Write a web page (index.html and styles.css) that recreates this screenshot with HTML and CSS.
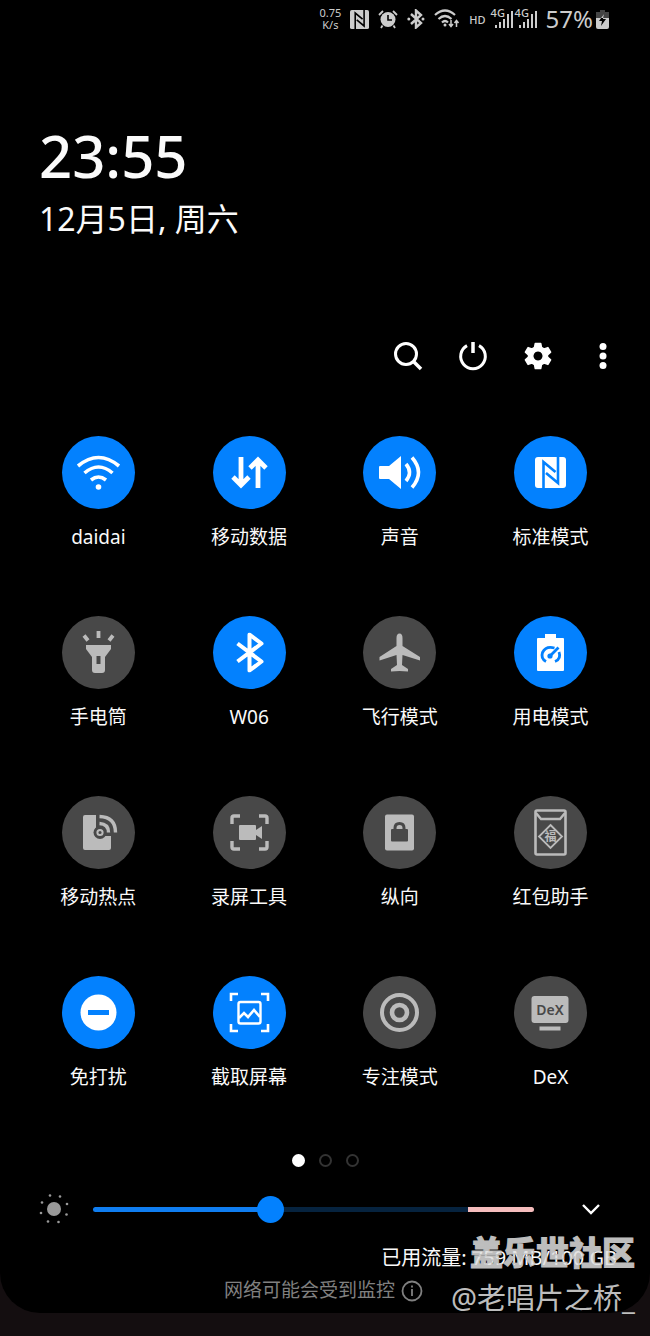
FILE: index.html
```
<!DOCTYPE html>
<html lang="zh-CN">
<head>
    <meta charset="UTF-8">
    <meta name="viewport" content="width=device-width, initial-scale=1.0">
    <title>快捷面板</title>
    <link rel="stylesheet" href="styles.css">
</head>
<body>
    <!-- shared shapes -->
    <svg class="defs" width="0" height="0" aria-hidden="true">
        <symbol id="nfc" viewBox="0 0 31 31">
            <rect width="31" height="31" rx="3" fill="currentColor"/>
            <path fill="none" stroke="var(--hole)" stroke-width="2.600" d="M8.500 31V5L20.500 15M23 0v26L11 16"/>
        </symbol>
        <symbol id="bt" viewBox="0 0 40 40">
            <path fill="none" stroke="currentColor" stroke-width="4" stroke-linejoin="round" d="M8 11l24 18-12 9V2l12 9L8 29"/>
        </symbol>
        <symbol id="signal" viewBox="0 0 18 18">
            <path fill="currentColor" d="M0 15h2v3H0zM4 12h2v6H4zM8 9h2v9H8zM12 4h2v14h-2zM16 1h2v17h-2z"/>
        </symbol>
    </svg>

    <main class="panel">
        <div class="status">
            <span class="speed">0.75<br>K/s</span>
            <svg class="s-nfc" width="19" height="19"><use href="#nfc"/></svg>
            <svg class="s-alarm" width="20" height="20" viewBox="0 0 20 20">
                <circle cx="10" cy="10.500" r="7.500" fill="currentColor"/>
                <path d="M10 6v5h4" fill="none" stroke="#000" stroke-width="1.6"/>
                <path d="M1 6l4-4M19 6l-4-4M4.500 16.500L3 19M15.500 16.500L17 19" stroke="currentColor" stroke-width="1.8"/>
            </svg>
            <svg class="s-bt" width="18" height="20" viewBox="0 0 18 20">
                <path d="M4 5l10 9-5 4.500v-17L14 6 4 15" fill="none" stroke="currentColor" stroke-width="2.400"/>
                <circle cx="1.800" cy="10" r="1.500" fill="currentColor"/><circle cx="16" cy="10" r="1.500" fill="currentColor"/>
            </svg>
            <svg class="s-wifi" width="26" height="20" viewBox="0 0 26 20">
                <path d="M1 6q10-9 20 0M4.500 10q6.500-6 13 0M8 13.500q3-3 6 0" fill="none" stroke="currentColor" stroke-width="2.200"/>
                <circle cx="11" cy="16" r="1.500" fill="currentColor"/>
                <path d="M17 11v6M15 15l2 2.500 2-2.500M22.500 18v-6M20.500 14l2-2.500 2 2.500" fill="none" stroke="currentColor" stroke-width="1.500"/>
            </svg>
            <span class="hd">HD</span>
            <span class="cell"><span class="gen">4G</span><svg width="18" height="18"><use href="#signal"/></svg></span>
            <span class="cell"><span class="gen">4G</span><svg width="18" height="18"><use href="#signal"/></svg></span>
            <span class="percent">57%</span>
            <svg class="s-battery" width="13" height="19" viewBox="0 0 13 19">
                <path d="M4 0h5v2h4v7H0V2h4z" fill="#444"/>
                <path d="M0 8h13v9q0 2-2 2H2q-2 0-2-2z" fill="currentColor"/>
                <path d="M8 4L3 11h3l-1 5 5-7H7z" fill="#000"/>
                <path d="M8 4L5 8h4L7 9z" fill="#ccc"/>
            </svg>
        </div>

        <header class="clock">
            <h1 class="time">23:55</h1>
            <p class="date">12月5日, 周六</p>
        </header>

        <nav class="toolbar">
            <button type="button" aria-label="搜索">
                <svg width="30" height="30" viewBox="0 0 30 30"><circle cx="13" cy="13" r="10.500" fill="none" stroke="#fff" stroke-width="3"/><path d="M20.500 20.500l7.500 7.500" stroke="#fff" stroke-width="3.500"/></svg>
            </button>
            <button type="button" aria-label="电源">
                <svg width="30" height="30" viewBox="0 0 30 30"><path d="M9 4.600A12.300 12.300 0 1 0 21 4.600" fill="none" stroke="#fff" stroke-width="3"/><path d="M15 1v11" stroke="#fff" stroke-width="3.500"/></svg>
            </button>
            <button type="button" aria-label="设置">
                <svg width="30" height="30" viewBox="0 0 30 30"><path fill="#fff" fill-rule="evenodd" stroke="#fff" stroke-width="1.500" stroke-linejoin="round" d="M12.300 2.500h5.400l.8 4 2.500 1.400 3.900-1.300 2.700 4.600-3.100 2.700v2.200l3.100 2.700-2.700 4.600-3.900-1.300-2.500 1.400-.8 4h-5.400l-.8-4L9 22.100l-3.900 1.300-2.700-4.600 3.100-2.700v-2.200l-3.100-2.700 2.700-4.600L9 7.900l2.500-1.400zM15 9.700a5.300 5.300 0 1 0 .01 0z"/></svg>
            </button>
            <button type="button" aria-label="更多">
                <svg width="30" height="30" viewBox="0 0 30 30" fill="#fff"><circle cx="15" cy="5.500" r="3.500"/><circle cx="15" cy="15" r="3.500"/><circle cx="15" cy="24.500" r="3.500"/></svg>
            </button>
        </nav>

        <section class="tiles">
            <button type="button" class="tile on" aria-pressed="true">
                <span class="disc"><svg viewBox="0 0 73 73">
                    <path d="M16 30q20.500-17 41 0M22.500 37q14-12 28 0M29 44q7.500-6 15 0" fill="none" stroke="currentColor" stroke-width="3.600"/>
                    <circle cx="36.500" cy="51" r="2.800" fill="currentColor"/>
                </svg></span>
                <span class="label">daidai</span>
            </button>
            <button type="button" class="tile on" aria-pressed="true">
                <span class="disc"><svg viewBox="0 0 73 73" fill="none" stroke="currentColor" stroke-width="4.800">
                    <path d="M28 21v28M20 41l8 8 8-8M45 52V24M37 32l8-8 8 8"/>
                </svg></span>
                <span class="label">移动数据</span>
            </button>
            <button type="button" class="tile on" aria-pressed="true">
                <span class="disc"><svg viewBox="0 0 73 73">
                    <path d="M17 30h9l12-10v33L26 43h-9q-1 0-1-1V31q0-1 1-1z" fill="currentColor"/>
                    <path d="M43 28q7 8.500 0 17M49 21.500q13 15 0 30" fill="none" stroke="currentColor" stroke-width="3.600"/>
                </svg></span>
                <span class="label">声音</span>
            </button>
            <button type="button" class="tile on" aria-pressed="true">
                <span class="disc"><svg viewBox="0 0 73 73"><use href="#nfc" x="21" y="21" width="31" height="31"/></svg></span>
                <span class="label">标准模式</span>
            </button>

            <button type="button" class="tile" aria-pressed="false">
                <span class="disc"><svg viewBox="0 0 73 73">
                    <path fill="currentColor" fill-rule="evenodd" d="M24 29h25v4l-6 8v13q0 3-3 3h-7q-3 0-3-3V41l-6-8zM34.500 40v8h4v-8z"/>
                    <path d="M36.500 15v7M22 19.500l4 5M51 19.500l-4 5" stroke="currentColor" stroke-width="3.800"/>
                </svg></span>
                <span class="label">手电筒</span>
            </button>
            <button type="button" class="tile on" aria-pressed="true">
                <span class="disc"><svg viewBox="0 0 73 73"><use href="#bt" x="16.500" y="16.500" width="40" height="40"/></svg></span>
                <span class="label">W06</span>
            </button>
            <button type="button" class="tile" aria-pressed="false">
                <span class="disc"><svg viewBox="0 0 73 73">
                    <path fill="currentColor" d="M36.500 17.500q3 0 3 4.500v8L57 41v3.500L39.500 39l-.5 10 6 4v2.500l-8.500-.5-8.500.5V53l6-4-.5-10L16.500 44.500V41l17-11v-8q0-4.500 3-4.500z"/>
                </svg></span>
                <span class="label">飞行模式</span>
            </button>
            <button type="button" class="tile on" aria-pressed="true">
                <span class="disc"><svg viewBox="0 0 73 73">
                    <path fill="currentColor" d="M31 18h11v4h7q1 0 1 1v31q0 1-1 1H24q-1 0-1-1V23q0-1 1-1h7z"/>
                    <path d="M32 45.500q-5.500-3-3.500-9 3.500-7 12-4.500M45 36q2.500 7-4 9.500M36 40l8.500-8.500" fill="none" stroke="var(--hole)" stroke-width="2.800"/>
                    <circle cx="36" cy="40" r="2.600" fill="var(--hole)"/>
                </svg></span>
                <span class="label">用电模式</span>
            </button>

            <button type="button" class="tile" aria-pressed="false">
                <span class="disc"><svg viewBox="0 0 73 73">
                    <path fill="currentColor" d="M23 19h11v21h15v12q0 2-2 2H23q-2 0-2-2V21q0-2 2-2z"/>
                    <circle cx="38" cy="36.500" r="6.500" fill="var(--hole)"/>
                    <circle cx="38" cy="36.500" r="2.600" fill="none" stroke="currentColor" stroke-width="2"/>
                    <path d="M37.500 27.500q9 .500 9 9M37.500 20.500q16 .500 16 16" fill="none" stroke="currentColor" stroke-width="3.400"/>
                </svg></span>
                <span class="label">移动热点</span>
            </button>
            <button type="button" class="tile" aria-pressed="false">
                <span class="disc"><svg viewBox="0 0 73 73">
                    <path d="M19 28v-6q0-2 2-2h6M46 20h6q2 0 2 2v6M54 45v6q0 2-2 2h-6M27 53h-6q-2 0-2-2v-6" fill="none" stroke="currentColor" stroke-width="3.400"/>
                    <path fill="currentColor" d="M27 29h15q1 0 1 1v4l6-4v13l-6-4v4q0 1-1 1H27q-1 0-1-1V30q0-1 1-1z"/>
                </svg></span>
                <span class="label">录屏工具</span>
            </button>
            <button type="button" class="tile" aria-pressed="false">
                <span class="disc"><svg viewBox="0 0 73 73">
                    <rect x="22" y="18.500" width="29" height="36" rx="2" fill="currentColor"/>
                    <rect x="28" y="33" width="17" height="12.500" rx="1" fill="var(--hole)"/>
                    <path d="M32 34v-2q0-4.500 4.500-4.500T41 32v2" fill="none" stroke="var(--hole)" stroke-width="3"/>
                </svg></span>
                <span class="label">纵向</span>
            </button>
            <button type="button" class="tile" aria-pressed="false">
                <span class="disc"><svg viewBox="0 0 73 73" fill="none" stroke="currentColor">
                    <rect x="21.500" y="14.500" width="30" height="44" rx="1.500" stroke-width="2.600"/>
                    <path d="M22 17l5 6h19l5-6" stroke-width="2.400"/>
                    <path d="M36.500 29L48 40.500 36.500 52 25 40.500z" stroke-width="1.800"/>
                    <text class="fu" x="36.500" y="44.500">福</text>
                </svg></span>
                <span class="label">红包助手</span>
            </button>

            <button type="button" class="tile on" aria-pressed="true">
                <span class="disc"><svg viewBox="0 0 73 73">
                    <circle cx="36.500" cy="36.500" r="18" fill="currentColor"/>
                    <path d="M26 36.500h21" stroke="var(--hole)" stroke-width="5"/>
                </svg></span>
                <span class="label">免打扰</span>
            </button>
            <button type="button" class="tile on" aria-pressed="true">
                <span class="disc"><svg viewBox="0 0 73 73" fill="none" stroke="currentColor">
                    <path d="M18 25v-7h7M48 18h7v7M55 48v7h-7M25 55h-7v-7" stroke-width="2.600"/>
                    <rect x="25.500" y="26" width="22" height="21.500" rx="2" stroke-width="2.400"/>
                    <path d="M26 42l5-5 4 4 6-7 6 7" stroke-width="2.600"/>
                </svg></span>
                <span class="label">截取屏幕</span>
            </button>
            <button type="button" class="tile" aria-pressed="false">
                <span class="disc"><svg viewBox="0 0 73 73" fill="none" stroke="currentColor">
                    <circle cx="36.500" cy="36.500" r="17.500" stroke-width="4"/>
                    <circle cx="36.500" cy="36.500" r="7.500" stroke-width="4.600"/>
                </svg></span>
                <span class="label">专注模式</span>
            </button>
            <button type="button" class="tile" aria-pressed="false">
                <span class="disc"><svg viewBox="0 0 73 73">
                    <rect x="17.500" y="20" width="37" height="27" rx="3" fill="currentColor"/>
                    <rect x="25.500" y="50.500" width="21" height="4" fill="currentColor"/>
                    <text class="dex" x="36" y="39">DeX</text>
                </svg></span>
                <span class="label">DeX</span>
            </button>
        </section>

        <div class="pages">
            <span class="dot current"></span>
            <span class="dot"></span>
            <span class="dot"></span>
        </div>

        <div class="brightness">
            <svg class="sun" width="32" height="32" viewBox="0 0 32 32" fill="#999">
                <circle cx="16" cy="16" r="7"/>
                <circle cx="12" cy="2.500" r="1.300"/><circle cx="22" cy="3.500" r="1.300"/><circle cx="29" cy="11" r="1.300"/><circle cx="28.500" cy="21.500" r="1.300"/>
                <circle cx="20.500" cy="29" r="1.300"/><circle cx="10" cy="28.500" r="1.300"/><circle cx="3" cy="20" r="1.300"/><circle cx="4" cy="9.500" r="1.300"/>
            </svg>
            <input type="range" class="slider" aria-label="亮度" min="0" max="200" value="79">
            <button type="button" class="more" aria-label="展开">
                <svg width="20" height="12" viewBox="0 0 20 12"><path d="M2 2l8 8 8-8" fill="none" stroke="#fff" stroke-width="2.400"/></svg>
            </button>
        </div>

        <footer class="info">
            <p class="usage">已用流量: 759 MB/100 GB</p>
            <p class="monitor">网络可能会受到监控
                <svg width="22" height="22" viewBox="0 0 22 22"><circle cx="11" cy="11" r="9.500" fill="none" stroke="currentColor" stroke-width="1.800"/><path d="M11 9v7M11 5.500v2" stroke="currentColor" stroke-width="1.800"/></svg>
            </p>
        </footer>

        <div class="watermark">
            <p class="site">盖乐世社区</p>
            <p class="author">@老唱片之桥_</p>
        </div>
    </main>
</body>
</html>
```

FILE: styles.css
```
* {
    box-sizing: border-box;
}
body {
    margin: 0;
    min-height: 100vh;
    background-color: #140e10;
    color: #fafafa;
    font-family: "Noto Sans", "Noto Sans CJK SC", sans-serif;
}
h1, p {
    margin: 0;
    font-weight: 400;
}
button {
    padding: 0;
    border: none;
    background: none;
    color: inherit;
    font: inherit;
    cursor: pointer;
}
svg {
    display: block;
    flex: none;
}
.defs {
    position: absolute;
}
.panel {
    position: relative;
    padding-bottom: 6px;
    background: #000;
    border-radius: 0 0 40px 40px;
}

/* status bar */
.status {
    --hole: #000;
    display: flex;
    justify-content: flex-end;
    align-items: center;
    gap: 9px;
    height: 38px;
    padding-right: 41px;
    color: #ccc;
}
.speed {
    font-size: 11px;
    line-height: 12px;
    text-align: center;
}
.hd {
    font-size: 11px;
    font-weight: 500;
}
.cell {
    display: flex;
    position: relative;
    padding-left: 4px;
    margin-left: -7px;
}
.hd + .cell {
    margin-left: -4px;
}
.gen {
    position: absolute;
    left: 0;
    top: -3px;
    font-size: 11px;
    font-weight: 500;
    line-height: 12px;
}
.percent {
    font-size: 24px;
    line-height: 38px;
    margin-right: -6px;
}

/* clock */
.clock {
    padding: 80px 39px 0;
}
.time {
    font-size: 58px;
    font-weight: 500;
    line-height: 76px;
}
.date {
    font-size: 32px;
    line-height: 50px;
}

/* toolbar */
.toolbar {
    display: flex;
    justify-content: flex-end;
    padding: 82px 15px 0;
}
.toolbar button {
    display: flex;
    justify-content: center;
    align-items: center;
    width: 65px;
    height: 60px;
}

/* tiles */
.tiles {
    display: grid;
    grid-template-columns: repeat(4, 1fr);
    row-gap: 65px;
    padding: 50px 24px 0 23px;
}
.tile {
    --hole: #484848;
    display: flex;
    flex-direction: column;
    align-items: center;
    gap: 14px;
}
.tile.on {
    --hole: #0381fe;
}
.disc {
    width: 73px;
    height: 73px;
    border-radius: 50%;
    background: var(--hole);
    color: #bbb;
}
.tile.on .disc {
    color: #fff;
}
.label {
    font-size: 19px;
    line-height: 28px;
}
.fu, .dex {
    text-anchor: middle;
    stroke: none;
}
.fu {
    font-size: 12px;
    font-weight: 700;
    fill: currentColor;
}
.dex {
    font-size: 14px;
    font-weight: 600;
    fill: var(--hole);
}

/* page dots */
.pages {
    display: flex;
    justify-content: center;
    gap: 14px;
    padding-top: 63px;
}
.dot {
    width: 13px;
    height: 13px;
    border: 2px solid #333;
    border-radius: 50%;
}
.dot.current {
    border-color: #fff;
    background: #fff;
}

/* brightness */
.brightness {
    display: flex;
    align-items: center;
    height: 32px;
    margin-top: 26px;
    padding: 0 43px 0 38px;
}
.slider {
    flex: 1;
    appearance: none;
    -webkit-appearance: none;
    height: 27px;
    min-width: 0;
    margin: 0 41px 0 23px;
    background: none;
}
.slider::-webkit-slider-runnable-track {
    height: 5px;
    border-radius: 3px;
    background: linear-gradient(to right, #0f7df0 40%, #06233f 40%, #06233f 85%, #f5bcbc 85%);
}
.slider::-webkit-slider-thumb {
    -webkit-appearance: none;
    width: 27px;
    height: 27px;
    margin-top: -11px;
    border-radius: 50%;
    background: #0381fe;
}
.more {
    display: flex;
    justify-content: center;
    width: 32px;
}

/* footer */
.info {
    padding-top: 16px;
    line-height: 33px;
}
.usage {
    padding-right: 33px;
    font-size: 20px;
    text-align: right;
}
.monitor {
    display: flex;
    justify-content: center;
    align-items: center;
    gap: 6px;
    padding-right: 3px;
    font-size: 19px;
    color: #808080;
}

/* watermark over the footer */
.watermark {
    position: absolute;
    right: 15px;
    bottom: -7px;
    text-align: right;
    color: rgba(225, 225, 225, 0.85);
}
.site {
    font-size: 33px;
    font-weight: 900;
    line-height: 46px;
    -webkit-text-stroke: 1px rgb(190, 190, 190);
}
.author {
    font-size: 29px;
    line-height: 44px;
}
```
